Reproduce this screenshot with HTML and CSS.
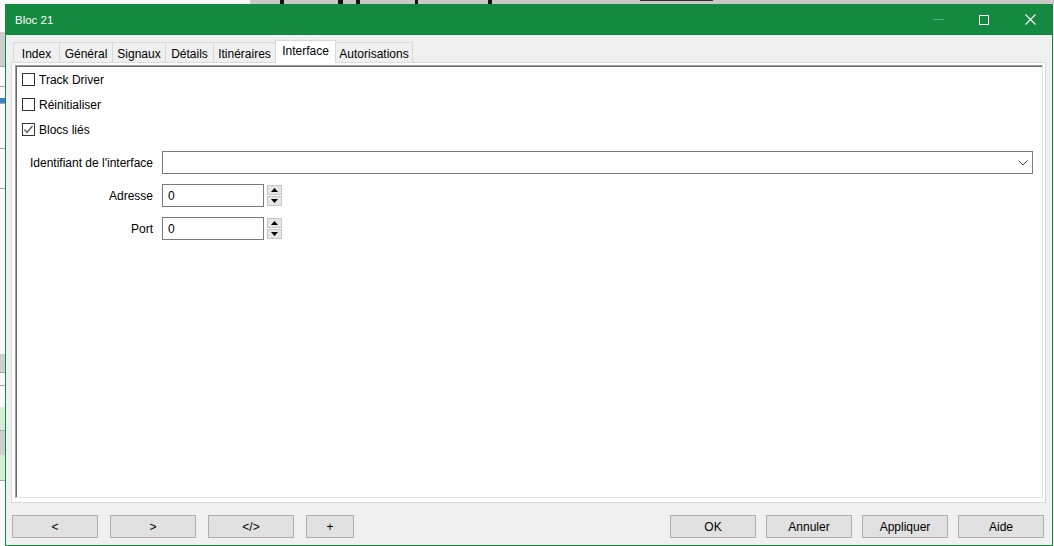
FILE: index.html
```html
<!DOCTYPE html>
<html lang="fr">
<head>
    <meta charset="UTF-8">
    <title>Bloc 21</title>
    <link rel="stylesheet" href="styles.css">
</head>
<body>
    <div class="desk-top">
        <span class="mark mark-a"></span>
        <span class="mark mark-b"></span>
        <span class="mark mark-c"></span>
        <span class="mark mark-d"></span>
        <span class="mark mark-e"></span>
        <span class="mark mark-f"></span>
    </div>
    <div class="desk">
        <div class="desk-left">
            <div class="strip white" style="height: 28px"></div>
            <div class="strip grey" style="height: 34px"></div>
            <div class="strip white lined" style="height: 20px"></div>
            <div class="strip white lined" style="height: 12px"></div>
            <div class="strip blue" style="height: 5px"></div>
            <div class="strip white lined" style="height: 45px"></div>
            <div class="strip white lined" style="height: 40px"></div>
            <div class="strip white lined" style="height: 19px"></div>
            <div class="strip white" style="height: 147px"></div>
            <div class="strip grey" style="height: 18px"></div>
            <div class="strip white lined" style="height: 13px"></div>
            <div class="strip white lined" style="height: 22px"></div>
            <div class="strip green" style="height: 23px"></div>
            <div class="strip grey lined" style="height: 25px"></div>
            <div class="strip green" style="height: 25px"></div>
            <div class="strip white lined" style="height: 38px"></div>
            <div class="strip white" style="height: 28px"></div>
        </div>

        <div class="window">
            <div class="titlebar">
                <span class="title">Bloc 21</span>
                <div class="controls">
                    <div class="ctl"><span class="min-line"></span></div>
                    <div class="ctl"><span class="max-box"></span></div>
                    <div class="ctl">
                        <svg width="11" height="11" viewBox="0 0 11 11">
                            <path d="M0.5 0.5 L10.5 10.5 M10.5 0.5 L0.5 10.5" stroke="#fff" stroke-width="1.1" fill="none"/>
                        </svg>
                    </div>
                </div>
            </div>

            <div class="tabs">
                <div class="tab" style="width: 47px">Index</div>
                <div class="tab" style="width: 54px">Général</div>
                <div class="tab" style="width: 54px">Signaux</div>
                <div class="tab" style="width: 49px">Détails</div>
                <div class="tab" style="width: 63px">Itinéraires</div>
                <div class="tab active" style="width: 61px">Interface</div>
                <div class="tab" style="width: 78px">Autorisations</div>
            </div>

            <div class="page">
                <div class="panel">
                    <label class="check-row"><span class="box"></span>Track Driver</label>
                    <label class="check-row"><span class="box"></span>Réinitialiser</label>
                    <label class="check-row">
                        <span class="box">
                            <svg width="11" height="11" viewBox="0 0 11 11">
                                <path d="M1.5 5.5 L4 8.5 L9.5 2" stroke="#555" stroke-width="1.3" fill="none"/>
                            </svg>
                        </span>Blocs liés
                    </label>

                    <div class="form-grid">
                        <div class="field-label">Identifiant de l'interface</div>
                        <div class="combo">
                            <svg width="10" height="6" viewBox="0 0 10 6">
                                <path d="M0.5 0.5 L5 5 L9.5 0.5" stroke="#444" stroke-width="1" fill="none"/>
                            </svg>
                        </div>

                        <div class="field-label">Adresse</div>
                        <div class="spin">
                            <div class="spin-input">0</div>
                            <div class="spin-btns">
                                <div class="spin-btn"><svg width="7" height="4" viewBox="0 0 7 4"><path d="M0 4 L3.5 0 L7 4 Z" fill="#000"/></svg></div>
                                <div class="spin-btn"><svg width="7" height="4" viewBox="0 0 7 4"><path d="M0 0 L3.5 4 L7 0 Z" fill="#000"/></svg></div>
                            </div>
                        </div>

                        <div class="field-label">Port</div>
                        <div class="spin">
                            <div class="spin-input">0</div>
                            <div class="spin-btns">
                                <div class="spin-btn"><svg width="7" height="4" viewBox="0 0 7 4"><path d="M0 4 L3.5 0 L7 4 Z" fill="#000"/></svg></div>
                                <div class="spin-btn"><svg width="7" height="4" viewBox="0 0 7 4"><path d="M0 0 L3.5 4 L7 0 Z" fill="#000"/></svg></div>
                            </div>
                        </div>
                    </div>
                </div>
            </div>

            <div class="buttons">
                <div class="btn-group">
                    <button class="btn">&lt;</button>
                    <button class="btn">&gt;</button>
                    <button class="btn">&lt;/&gt;</button>
                    <button class="btn small">+</button>
                </div>
                <div class="btn-group right">
                    <button class="btn">OK</button>
                    <button class="btn">Annuler</button>
                    <button class="btn">Appliquer</button>
                    <button class="btn">Aide</button>
                </div>
            </div>
        </div>
    </div>
</body>
</html>
```

FILE: styles.css
```css
body {
    margin: 0;
    width: 1054px;
    height: 546px;
    overflow: hidden;
    background: #f3f3f3;
    font-family: "Liberation Sans", Arial, sans-serif;
    font-size: 12px;
    color: #000;
}

/* bits of the app behind the dialog */
.desk-top {
    position: relative;
    height: 4px;
    background: linear-gradient(to right, #fafafa 0, #fafafa 250px, #c9c9c9 250px, #c9c9c9 1054px);
}
.mark {
    position: absolute;
    top: 0;
    height: 4px;
    background: #111;
}
.mark-a { left: 280px; width: 4px; }
.mark-b { left: 338px; width: 5px; }
.mark-c { left: 356px; width: 4px; }
.mark-d { left: 415px; width: 3px; }
.mark-e { left: 488px; width: 4px; }
.mark-f { left: 640px; width: 73px; height: 1px; background: #333; }

.desk {
    display: flex;
}
.desk-left {
    width: 5px;
    display: flex;
    flex-direction: column;
}
.strip { width: 5px; }
.strip.white { background: #fbfbfb; }
.strip.grey { background: #cfcfcf; }
.strip.green { background: #d6ecd6; }
.strip.blue { background: #3a7fd0; }
.strip.lined { border-top: 1px solid #a8a8a8; box-sizing: border-box; }

/* dialog window */
.window {
    width: 1048px;
    height: 542px;
    box-sizing: border-box;
    border: 1px solid #138a40;
    border-top: none;
    background: #f0f0f0;
    display: flex;
    flex-direction: column;
}
.titlebar {
    height: 31px;
    background: #138a40;
    display: flex;
    align-items: center;
    justify-content: space-between;
    padding-left: 9px;
    flex-shrink: 0;
}
.title {
    color: #fff;
    font-size: 11.5px;
    margin-top: 1px;
}
.controls {
    display: flex;
    height: 31px;
    margin-right: -1px;
}
.ctl {
    width: 46px;
    display: flex;
    align-items: center;
    justify-content: center;
}
.min-line {
    width: 11px;
    height: 1px;
    background: #5cae7b;
}
.max-box {
    width: 8px;
    height: 8px;
    border: 1px solid #fff;
}

/* tabs */
.tabs {
    display: flex;
    align-items: flex-end;
    height: 22px;
    margin-top: 5px;
    padding-left: 7px;
    flex-shrink: 0;
}
.tab {
    height: 20px;
    box-sizing: border-box;
    border: 1px solid #d9d9d9;
    border-bottom: none;
    margin-right: -1px;
    display: flex;
    align-items: center;
    justify-content: center;
    padding-top: 2px;
    background: #f0f0f0;
}
.tab.active {
    height: 23px;
    margin-bottom: -1px;
    background: #fff;
    position: relative;
    z-index: 1;
    padding-top: 0;
    padding-bottom: 2px;
}

.page {
    height: 441px;
    box-sizing: border-box;
    margin: 0 6px 0 5px;
    border: 1px solid #dadada;
    background: #fff;
    padding: 2px 2px 4px 3px;
    flex-shrink: 0;
    display: flex;
}
.panel {
    flex: 1;
    border-top: 1px solid #a0a0a0;
    border-left: 1px solid #a0a0a0;
    border-right: 1px solid #e3e3e3;
    border-bottom: 1px solid #e3e3e3;
    box-shadow: inset 1px 1px 0 #696969;
    padding: 1px 9px 0 6px;
}

.check-row {
    display: flex;
    align-items: center;
    height: 25px;
}
.box {
    width: 13px;
    height: 13px;
    box-sizing: border-box;
    border: 1px solid #333;
    background: #fff;
    margin-right: 4px;
    display: flex;
    align-items: center;
    justify-content: center;
}
.box svg { display: block; }

.form-grid {
    display: grid;
    grid-template-columns: 136px 1fr;
    column-gap: 9px;
    row-gap: 10px;
    margin-top: 9px;
    margin-left: -5px;
}
.field-label {
    text-align: right;
    align-self: center;
}
.combo {
    height: 23px;
    box-sizing: border-box;
    border: 1px solid #7a7a7a;
    background: #fff;
    display: flex;
    align-items: center;
    justify-content: flex-end;
    padding-right: 4px;
}
.spin {
    display: flex;
    align-items: center;
    gap: 3px;
}
.spin-input {
    width: 102px;
    height: 23px;
    box-sizing: border-box;
    border: 1px solid #7a7a7a;
    padding-left: 5px;
    display: flex;
    align-items: center;
}
.spin-btns {
    display: flex;
    flex-direction: column;
    gap: 1px;
}
.spin-btn {
    width: 15px;
    height: 10px;
    box-sizing: border-box;
    border: 1px solid #c6c6c6;
    background: #e6e6e6;
    display: flex;
    align-items: center;
    justify-content: center;
}
.spin-btn svg { display: block; }

/* bottom buttons */
.buttons {
    display: flex;
    justify-content: space-between;
    margin-top: 12px;
    padding: 0 8px 0 6px;
}
.btn-group {
    display: flex;
    gap: 12px;
}
.btn-group.right { gap: 10px; }
.btn {
    width: 86px;
    height: 23px;
    box-sizing: border-box;
    border: 1px solid #adadad;
    background: #e1e1e1;
    font-family: "Liberation Sans", Arial, sans-serif;
    font-size: 12px;
    color: #000;
    padding: 0;
}
.btn.small { width: 48px; }
```
